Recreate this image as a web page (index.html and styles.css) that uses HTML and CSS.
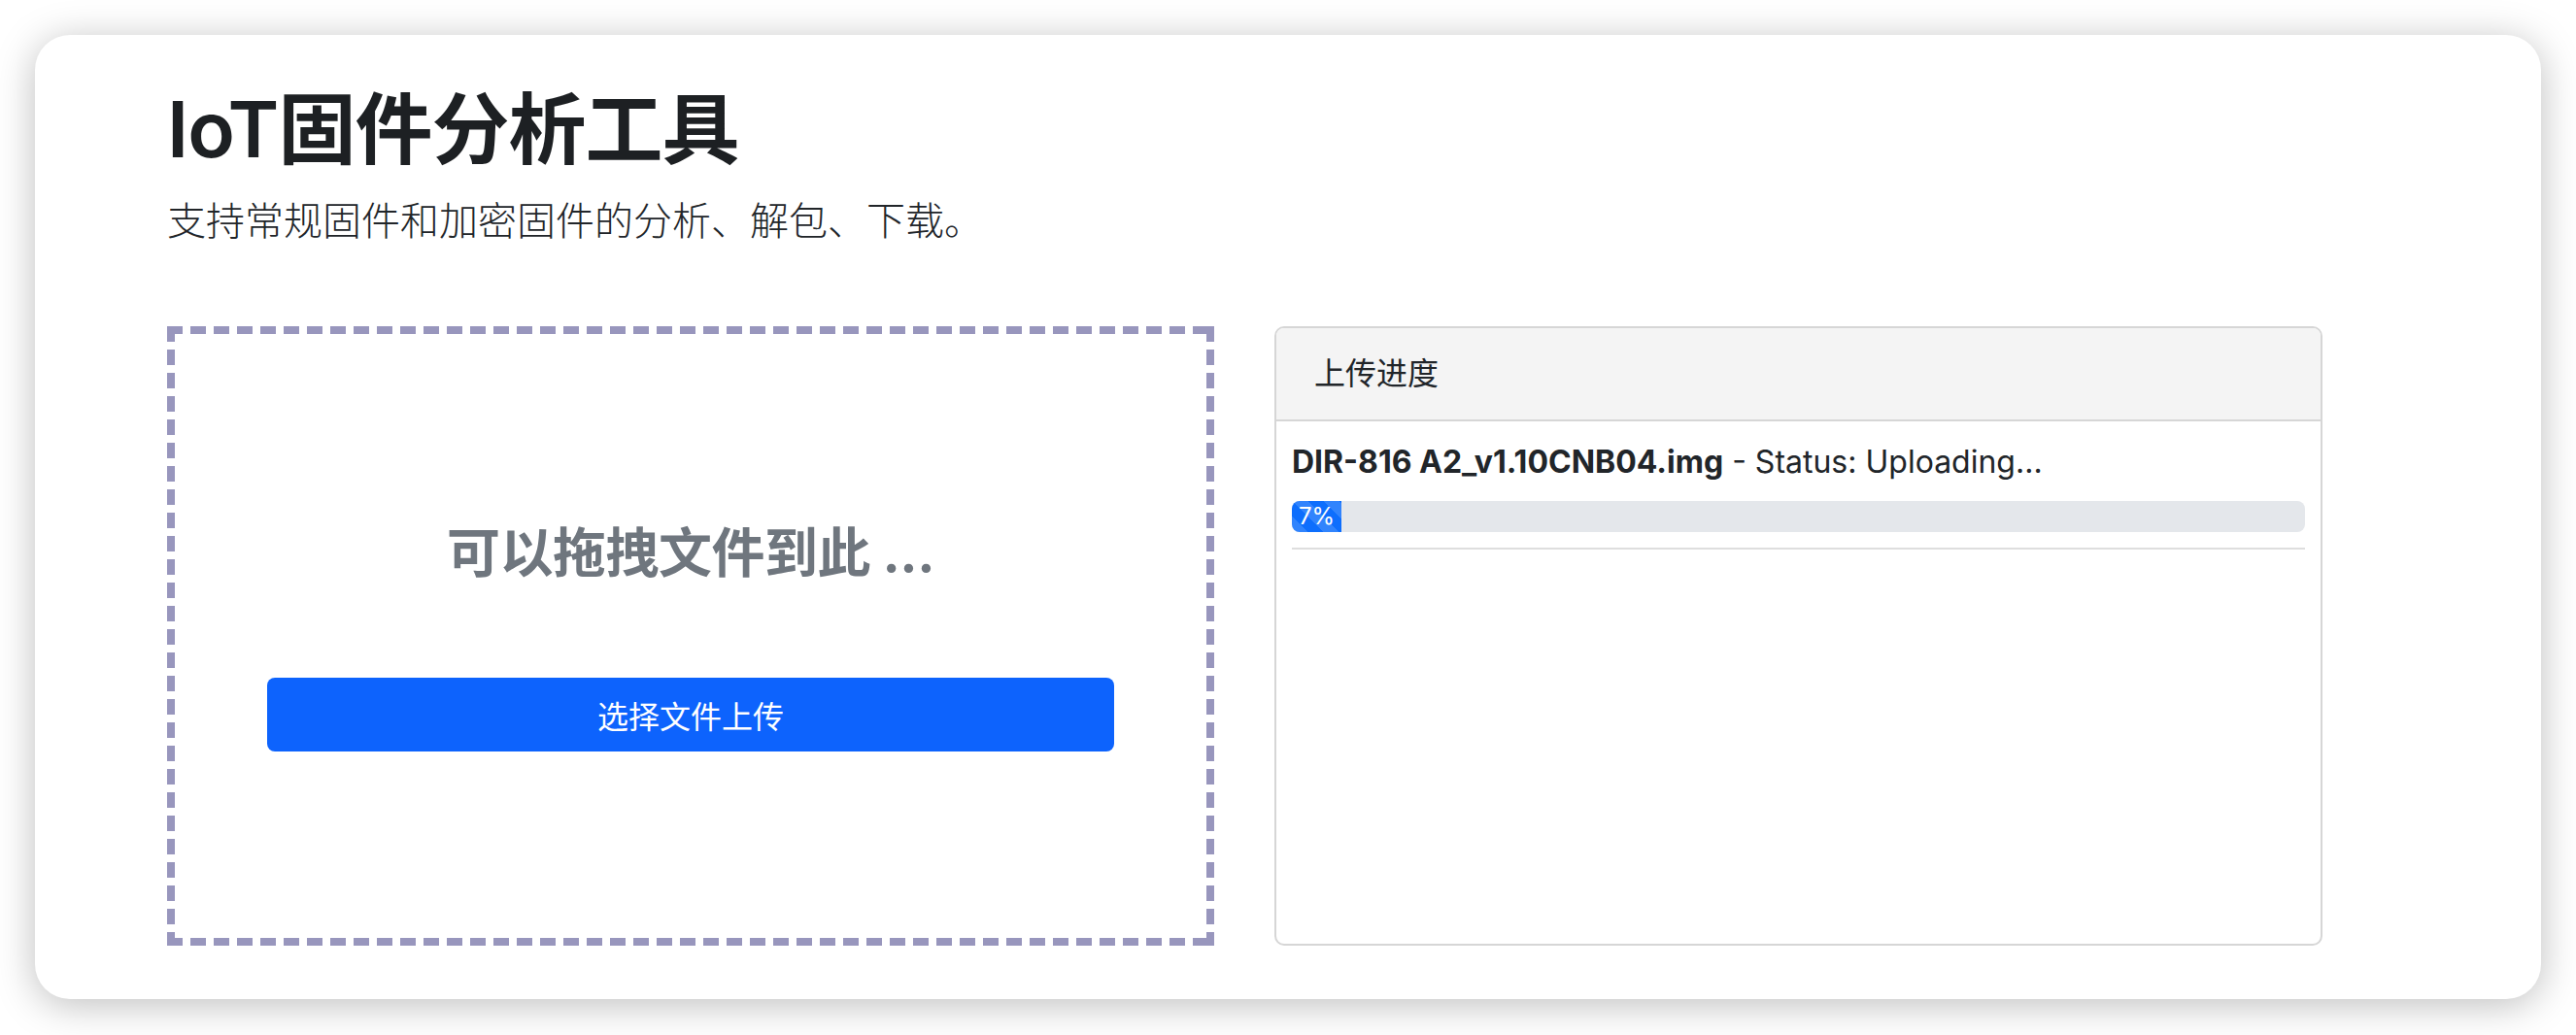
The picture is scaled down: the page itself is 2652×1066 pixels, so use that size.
FILE: index.html
```html
<!DOCTYPE html>
<html lang="zh-CN">
<head>
<meta charset="utf-8">
<title>IoT固件分析工具</title>
<link rel="stylesheet" href="styles.css">
</head>
<body>
<div class="window">
  <header class="intro">
    <h1 class="title">IoT固件分析工具</h1>
    <p class="lead">支持常规固件和加密固件的分析、解包、下载。</p>
  </header>
  <div class="row">
    <div class="dropzone">
      <h3 class="drop-text">可以拖拽文件到此 ...</h3>
      <button class="btn-upload" type="button">选择文件上传</button>
    </div>
    <div class="card">
      <div class="card-header">上传进度</div>
      <div class="card-body">
        <div class="upload-item">
          <p class="file-line"><strong>DIR-816 A2_v1.10CNB04.img</strong> - Status: Uploading...</p>
          <div class="progress">
            <div class="progress-bar" style="width: 4.9%">7%</div>
          </div>
          <hr class="divider">
        </div>
      </div>
    </div>
  </div>
</div>
</body>
</html>
```
FILE: styles.css
```css
html, body {
  margin: 0;
  padding: 0;
  background: #ffffff;
}

body {
  font-family: Inter, "Noto Sans CJK SC", sans-serif;
  color: #212529;
  width: 2652px;
  height: 1066px;
  overflow: hidden;
}

.window {
  margin: 36px;
  height: 993px;
  box-sizing: border-box;
  background: #ffffff;
  border-radius: 36px;
  box-shadow: 0 6px 40px rgba(0, 0, 0, 0.26);
  padding: 49px 0 0 136px;
}

.intro {
  margin: 0;
}

.title {
  margin: 0;
  font-size: 80px;
  line-height: 96px;
  font-weight: 600;
  color: #1d2023;
  letter-spacing: -1px;
}

.lead {
  margin: 17px 0 0;
  font-size: 40px;
  line-height: 60px;
  font-weight: 300;
  color: #212529;
}

.row {
  display: flex;
  gap: 62px;
  margin-top: 78px;
}

.dropzone {
  width: 1078px;
  height: 638px;
  box-sizing: border-box;
  padding: 8px;
  padding-top: 8px;
  display: flex;
  flex-direction: column;
  align-items: center;
  justify-content: center;
  gap: 96px;
  background-image:
    repeating-linear-gradient(to right, #9896bd 0 16px, transparent 16px 24px),
    repeating-linear-gradient(to right, #9896bd 0 16px, transparent 16px 24px),
    repeating-linear-gradient(to bottom, #9896bd 0 16px, transparent 16px 24px),
    repeating-linear-gradient(to bottom, #9896bd 0 16px, transparent 16px 24px);
  background-size: 100% 8px, 100% 8px, 8px 100%, 8px 100%;
  background-position: left top, left bottom, left top, right top;
  background-repeat: no-repeat;
}

.drop-text {
  margin: 0;
  font-size: 55px;
  line-height: 66px;
  font-weight: 700;
  color: #6f767e;
  letter-spacing: -0.5px;
}

.btn-upload {
  width: 872px;
  height: 76px;
  border: 0;
  border-radius: 8px;
  background: #0d63fd;
  color: #ffffff;
  font-family: Inter, "Noto Sans CJK SC", sans-serif;
  font-size: 32px;
  font-weight: 400;
  padding: 0;
}

.card {
  width: 1079px;
  height: 638px;
  box-sizing: border-box;
  border: 2px solid #d6d6d6;
  border-radius: 10px;
  overflow: hidden;
  background: #ffffff;
}

.card-header {
  background: #f4f4f4;
  border-bottom: 2px solid #d6d6d6;
  height: 94px;
  box-sizing: content-box;
  padding: 0 39px;
  font-size: 32px;
  line-height: 94px;
  color: #212529;
}

.card-body {
  padding: 18px 16px 16px;
}

.file-line {
  margin: 0 0 16px;
  font-size: 32px;
  line-height: 48px;
  color: #212529;
}

.file-line strong {
  font-weight: 700;
}

.progress {
  height: 32px;
  background: #e4e7eb;
  border-radius: 8px;
  overflow: hidden;
  display: flex;
}

.progress-bar {
  background-color: #0d6efd;
  background-image: linear-gradient(45deg,
    rgba(255, 255, 255, 0.15) 25%, transparent 25%,
    transparent 50%, rgba(255, 255, 255, 0.15) 50%,
    rgba(255, 255, 255, 0.15) 75%, transparent 75%, transparent);
  background-size: 32px 32px;
  color: #ffffff;
  font-size: 24px;
  line-height: 32px;
  text-align: center;
  white-space: nowrap;
}

.divider {
  margin: 16px 0 0;
  border: 0;
  border-top: 2px solid #dedede;
  height: 0;
}
```
